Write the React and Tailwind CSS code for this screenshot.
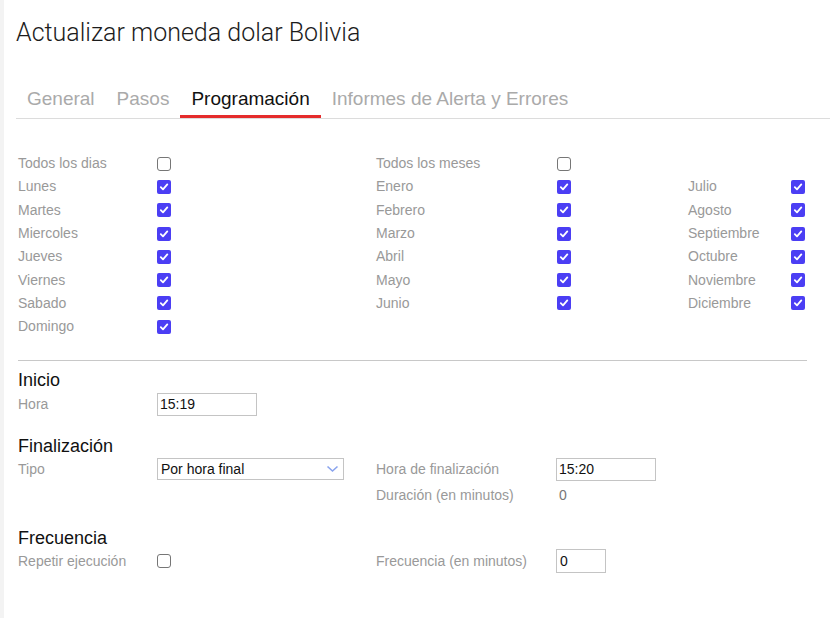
import React from 'react';

const sans = { fontFamily: '"Liberation Sans", Arial, sans-serif' };

const Check = ({ checked }) =>
  checked ? (
    <span className="flex h-[14px] w-[14px] items-center justify-center rounded-[2px] bg-[#4b3ef4]">
      <svg width="10" height="10" viewBox="0 0 10 10">
        <path d="M1.8 5.2 L4 7.4 L8.3 2.4" fill="none" stroke="white" strokeWidth="1.8" strokeLinecap="round" strokeLinejoin="round" />
      </svg>
    </span>
  ) : (
    <span className="block h-[14px] w-[14px] rounded-[3px] border border-[#767676] bg-white" />
  );

const days = [
  ['Todos los dias', false],
  ['Lunes', true],
  ['Martes', true],
  ['Miercoles', true],
  ['Jueves', true],
  ['Viernes', true],
  ['Sabado', true],
  ['Domingo', true],
];
const months1 = [['Todos los meses', false], ['Enero', true], ['Febrero', true], ['Marzo', true], ['Abril', true], ['Mayo', true], ['Junio', true]];
const months2 = [null, ['Julio', true], ['Agosto', true], ['Septiembre', true], ['Octubre', true], ['Noviembre', true], ['Diciembre', true]];

const Cell = ({ item }) =>
  item ? (
    <>
      <div className="text-[14px] text-[#999]">{item[0]}</div>
      <div className="flex items-center">
        <Check checked={item[1]} />
      </div>
    </>
  ) : (
    <>
      <div />
      <div />
    </>
  );

const App = () => {
  const tabs = ['General', 'Pasos', 'Programación', 'Informes de Alerta y Errores'];

  return (
    <div className="flex min-h-[618px] bg-white" style={sans}>
      <div className="w-[4px] shrink-0 bg-[#f3f3f3]" />
      <div className="flex-1 pl-[12px]">
        <h1
          className="pt-[17px] text-[25px] font-light leading-[31px] text-[#1c1c1c]"
          style={{ fontFamily: 'Roboto, sans-serif' }}
        >
          Actualizar moneda dolar Bolivia
        </h1>

        <div className="mt-[38px] flex border-b border-[#dcdcdc]">
          {tabs.map((t, i) => (
            <div
              key={t}
              className={`border-b-[3px] px-[11px] pb-[4px] text-[19px] leading-[25px] ${
                i === 2 ? 'border-[#e52b2b] text-[#111]' : 'border-transparent text-[#aaa]'
              }`}
            >
              {t}
            </div>
          ))}
        </div>

        <div className="mt-[33px] pl-[2px]">
          <div className="grid grid-cols-[139px_219px_181px_131px_103px_20px] auto-rows-[23.3px] items-center">
            {days.map((d, r) => (
              <React.Fragment key={d[0]}>
                <Cell item={d} />
                <Cell item={months1[r]} />
                <Cell item={months2[r]} />
              </React.Fragment>
            ))}
          </div>

          <div className="mt-[22px] h-px w-[789px] bg-[#c8c8c8]" />

          <h2 className="mt-[8px] text-[18px] leading-[22px] text-[#111]">Inicio</h2>
          <div className="mt-[1px] flex h-[24px] items-center text-[14px]">
            <div className="w-[139px] text-[#999]">Hora</div>
            <div className="flex h-[23px] w-[100px] items-center border border-[#c4c4c4] pl-[2px] text-[#111]">15:19</div>
          </div>

          <h2 className="mt-[19px] text-[18px] leading-[22px] text-[#111]">Finalización</h2>
          <div className="flex text-[14px]">
            <div className="w-[358px]">
              <div className="flex h-[24px] items-center">
                <div className="w-[139px] text-[#999]">Tipo</div>
                <div className="flex h-[22px] w-[187px] items-center justify-between border border-[#c4c4c4] pl-[3px] pr-[4px] text-[#111]">
                  <span>Por hora final</span>
                  <svg width="13" height="8" viewBox="0 0 13 8">
                    <path d="M1.5 1.5 L6.5 6 L11.5 1.5" fill="none" stroke="#8aa4ee" strokeWidth="1.6" />
                  </svg>
                </div>
              </div>
            </div>
            <div>
              <div className="flex h-[24px] items-center">
                <div className="w-[180px] text-[#999]">Hora de finalización</div>
                <div className="flex h-[23px] w-[100px] items-center border border-[#c4c4c4] pl-[2px] text-[#111]">15:20</div>
              </div>
              <div className="mt-[2px] flex h-[24px] items-center">
                <div className="w-[183px] text-[#999]">Duración (en minutos)</div>
                <div className="text-[#777]">0</div>
              </div>
            </div>
          </div>

          <h2 className="mt-[20px] text-[18px] leading-[22px] text-[#111]">Frecuencia</h2>
          <div className="flex h-[24px] items-center text-[14px]">
            <div className="w-[139px] text-[#999]">Repetir ejecución</div>
            <div className="w-[219px]">
              <Check checked={false} />
            </div>
            <div className="w-[180px] text-[#999]">Frecuencia (en minutos)</div>
            <div className="flex h-[24px] w-[50px] items-center border border-[#c4c4c4] pl-[3px] text-[#111]">0</div>
          </div>
        </div>
      </div>
    </div>
  );
};

export default App;
